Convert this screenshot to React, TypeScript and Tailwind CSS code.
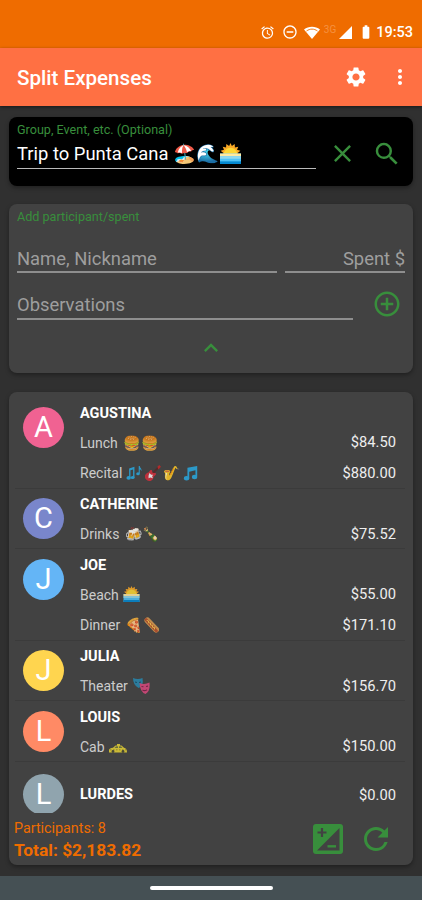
import type { ReactNode } from 'react'
import {
  MdAccessAlarm,
  MdAddCircleOutline,
  MdBatteryFull,
  MdClose,
  MdKeyboardArrowUp,
  MdMoreVert,
  MdRefresh,
  MdRemoveCircleOutline,
  MdSearch,
  MdSettings,
} from 'react-icons/md'

type Item = { label: string; icons: ReactNode; amount: string }

type Participant = { name: string; color: string; items: Item[] }

function Sunrise({ className }: { className: string }) {
  return (
    <svg viewBox="0 0 20 20" className={`inline-block ${className}`}>
      <path d="M10 0l1.300 2.800L14 1l.2 3.200 3.200-.6-1.200 2.900 3.200.8-2.600 2.200V12H3.200V9.500L.6 7.300l3.200-.8-1.200-2.900 3.200.6L6 1l2.700 1.800z" fill="#f9a825" />
      <path d="M3.500 11a6.500 6.500 0 0113 0z" fill="#fdd835" />
      <path d="M0 10h20v10H0z" fill="#4fc3f7" />
      <path d="M0 10h20v2.500H0z" fill="#ffe9a0" />
      <path d="M0 12.500h20v2.500H0z" fill="#8fd8ee" />
      <path d="M0 17.500h20V20H0z" fill="#0288d1" />
    </svg>
  )
}

// two separate pairs of notes, the right one smaller and higher
function Notes() {
  return (
    <svg viewBox="0 0 18 18" className="inline-block w-4 h-4 -mt-1 mr-[3px]" fill="#29a9e0">
      <path d="M3.500 14V4l6-2v12H8V5L5 6v8z" />
      <ellipse cx="3" cy="14.500" rx="2.500" ry="2" />
      <ellipse cx="7.500" cy="14" rx="2.200" ry="1.700" />
      <path d="M14.300 9.500V1h1.200c0 2 2.500 2.500 2 6-.5-1.600-1.300-2-2-2v4.500z" />
      <ellipse cx="13.500" cy="9.800" rx="2" ry="1.700" />
    </svg>
  )
}

function Guitar() {
  return (
    <svg viewBox="0 0 18 18" className="inline-block w-4 h-4 -mt-1 mr-[2px]">
      <path d="M8 10L15 3" stroke="#5b2526" strokeWidth="2" />
      <path d="M14 2l2-2 2 2-3 3z" fill="#c62828" />
      <path d="M1 10c2-2 3-1 4-3s3-2 3 0 1 2 3 2 2 2 0 3-1 3-3 5-5 1-7-1-1-5 0-6z" fill="#d32f3c" />
      <path d="M5 9l2 2 2 0-1 2 1 2-3-1-2 1 0-3z" fill="#f5f5f5" />
    </svg>
  )
}

function Note() {
  return (
    <svg viewBox="0 0 18 18" className="inline-block w-4 h-4 -mt-1 ml-[3px]" fill="#29a9e0">
      <path d="M5 3l11-2v12h-2V6L7 7.500V15H5z" />
      <ellipse cx="4" cy="15" rx="3" ry="2.500" />
      <ellipse cx="13" cy="13.500" rx="3" ry="2.500" />
    </svg>
  )
}

function HotDog() {
  return (
    <svg viewBox="0 0 16 16" className="inline-block w-4 h-4 -mt-1" fill="none" strokeLinecap="round">
      <path d="M4.500 3.500l8.500 9" stroke="#d99a4e" strokeWidth="6" />
      <path d="M3 2.500l10.500 11.500" stroke="#b9502c" strokeWidth="2.800" />
      <path d="M4 3.500l1.500.5v1.800l2 .2v2l2 .3v1.900l2 .3v1.500" stroke="#ffca4b" strokeWidth="1" />
    </svg>
  )
}

function Masks() {
  return (
    <svg viewBox="0 0 17 17" className="inline-block w-[17px] h-[17px] -mt-1 ml-[2px]">
      <path d="M0 1q5 2 9.500 0 1.500 8-4 10Q0 8 0 1z" fill="#2787ad" />
      <path d="M2 5l2 .5M6 5.500L8 5" stroke="#174d68" strokeWidth="1" />
      <path d="M6.500 6q5 2 10-.5 1 9-4 11.500-5.500-2-6-11z" fill="#d8497d" />
      <path d="M8.500 9.500l2 .2M13 9.500l2-.4M9.500 13q2 1.500 4.500-.3" stroke="#7d2249" strokeWidth="1.100" fill="none" />
    </svg>
  )
}

function Taxi() {
  return (
    <svg viewBox="0 0 18 9" className="inline-block w-[18px] h-[9px] ml-px">
      <path d="M0 8.500V6Q.5 4 4 3.800L6.500 1.500H8V0h3v1.500h1.500L15 3.800q3 .4 3 4.700z" fill="#e3cf35" />
      <path d="M5.500 3.800L7 2.400h2v1.400zM10 2.400h2l1.400 1.400H10z" fill="#4c5a46" />
      <path d="M1 5.800h16" stroke="#8a8430" strokeWidth="0.800" strokeDasharray="1.500" />
      <circle cx="4" cy="7.500" r="1.400" fill="#4a4a32" />
      <circle cx="14" cy="7.500" r="1.400" fill="#4a4a32" />
    </svg>
  )
}

const PARTICIPANTS: Participant[] = [
  {
    name: 'AGUSTINA',
    color: 'bg-[#f06292]',
    items: [
      { label: 'Lunch', icons: <span className="tracking-[1px] ml-[2px]">🍔🍔</span>, amount: '$84.50' },
      { label: 'Recital', icons: <><Notes /><Guitar />🎷<Note /></>, amount: '$880.00' },
    ],
  },
  {
    name: 'CATHERINE',
    color: 'bg-[#7986cb]',
    items: [{ label: 'Drinks', icons: <span className="ml-[2px]">🍻🍾</span>, amount: '$75.52' }],
  },
  {
    name: 'JOE',
    color: 'bg-[#64b5f6]',
    items: [
      { label: 'Beach', icons: <Sunrise className="w-[17px] h-4 -mt-1 ml-px" />, amount: '$55.00' },
      { label: 'Dinner', icons: <span className="ml-[2px]">🍕<HotDog /></span>, amount: '$171.10' },
    ],
  },
  { name: 'JULIA', color: 'bg-[#ffd54f]', items: [{ label: 'Theater', icons: <Masks />, amount: '$156.70' }] },
  { name: 'LOUIS', color: 'bg-[#ff8a65]', items: [{ label: 'Cab', icons: <Taxi />, amount: '$150.00' }] },
  { name: 'LURDES', color: 'bg-[#90a4ae]', items: [] },
]

function StatusBar() {
  return (
    <div className="h-12 bg-[#ef6c00] flex items-start justify-end pr-[9px] pt-[22px] text-white">
      <div className="flex items-center h-5">
        <MdAccessAlarm className="w-[15px] h-[15px] mr-[7px]" />
        <MdRemoveCircleOutline className="w-4 h-4 mr-[6px]" />
        <svg viewBox="0 0 16 13" className="w-4 h-[13px] mr-1" fill="#fff">
          <path d="M0 3.500C4.500-.2 11.500-.2 16 3.500L8 13Z" />
          <path d="M2.500 5C6 2.500 10 2.500 13.500 5" stroke="#ef6c00" strokeWidth="0.900" fill="none" />
        </svg>
        <span className="text-[10px] leading-none text-[#f59140] -mt-1 mr-[3px]">3G</span>
        <svg viewBox="0 0 13 13" className="w-[13px] h-[13px] mr-[6px]" fill="#fff">
          <path d="M13 0V13H0Z" />
        </svg>
        <MdBatteryFull className="w-4 h-4 mr-[2px]" />
        <span className="text-[14.5px] font-medium leading-5 pt-px">19:53</span>
      </div>
    </div>
  )
}

// rounded square split on the diagonal, plus on the solid half and minus on the open one
function BalanceIcon({ className }: { className: string }) {
  return (
    <svg viewBox="0 0 30 30" className={className}>
      <rect width="30" height="30" rx="3" fill="#388e3c" />
      <path d="M26.500 4v22.500H4z" fill="#424242" />
      <path d="M4.500 8.500h9M9 4v9" stroke="#424242" strokeWidth="2.200" />
      <path d="M14.500 22.300h8.500" stroke="#388e3c" strokeWidth="2.400" />
    </svg>
  )
}

function Card({ className, children }: { className: string; children: ReactNode }) {
  return <section className={`mx-[9px] rounded-lg shadow-[0_2px_4px_rgba(0,0,0,0.35)] ${className}`}>{children}</section>
}

function ParticipantRow({ name, color, items }: Participant) {
  const empty = items.length === 0
  return (
    <div className={`flex ml-[6px] mr-2 pl-2 pr-[9px] shadow-[inset_0_-1px_0_#3b3b3b] ${empty ? 'h-[52px] pt-3' : 'pt-[9.5px]'}`}>
      <div className={`w-[41px] h-[41px] shrink-0 rounded-full flex items-center justify-center text-white text-[29px] leading-none ${color}`}>
        {name[0]}
      </div>
      <div className={`ml-4 flex-1 text-sm ${empty ? 'pt-[10.5px]' : '-mt-[3.5px]'}`}>
        <div className="flex justify-between h-[22px] items-center">
          <span className="font-bold text-white text-[14.5px]">{name}</span>
          {empty && <span className="text-[#eee] text-[14.7px]">$0.00</span>}
        </div>
        <div className="pt-[2px]">
          {items.map(item => (
            <div key={item.label} className="flex justify-between items-center h-[30.67px]">
              <span className="text-[#ccc]">
                {item.label} <span className="opacity-85">{item.icons}</span>
              </span>
              <span className="text-[#eee] text-[14.7px]">{item.amount}</span>
            </div>
          ))}
        </div>
      </div>
    </div>
  )
}

export default function App() {
  return (
    <div className="w-[422px] h-[900px] overflow-hidden flex flex-col bg-[#303030] font-[Roboto,'Noto_Color_Emoji',sans-serif]">
      <StatusBar />
      <header className="h-[58px] bg-[#ff7043] flex items-center pl-[17px] pr-[10px] text-white shadow-[0_1px_3px_rgba(0,0,0,0.5)]">
        <h1 className="flex-1 text-[20.6px] font-medium pt-0.5">Split Expenses</h1>
        <MdSettings className="w-6 h-6 mr-5" />
        <MdMoreVert className="w-6 h-6" />
      </header>

      <Card className="mt-[11px] h-[69px] bg-black flex px-2 text-[#388e3c]">
        <div className="w-[299px]">
          <p className="text-[12.6px] leading-4 pt-[5px]">Group, Event, etc. (Optional)</p>
          <p className="h-[31px] border-b border-[#bbb] text-white text-[18.4px] leading-[32px] whitespace-nowrap">
            Trip to Punta Cana <span className="tracking-[0.5px]">🏖️🌊</span>
            <Sunrise className="w-[21px] h-[21px] -mt-1" />
          </p>
        </div>
        <MdClose className="w-[29px] h-[29px] mt-[22px] ml-3" />
        <MdSearch className="w-[30px] h-[30px] mt-[22px] ml-[15px]" />
      </Card>

      <Card className="mt-[18px] h-[169px] bg-[#424242] px-2 text-[#388e3c]">
        <p className="text-[12.6px] leading-4 pt-[5px]">Add participant/spent</p>
        <div className="flex gap-2 mt-[17px] text-[18.4px] leading-[33px] text-[#9e9e9e]">
          <div className="w-[260px] h-[31px] border-b-2 border-[#8e8e8e]">Name, Nickname</div>
          <div className="flex-1 h-[31px] border-b-2 border-[#8e8e8e] text-right">Spent $</div>
        </div>
        <div className="flex mt-[15px]">
          <div className="w-[336px] h-8 border-b-2 border-[#8e8e8e] text-[18.4px] leading-[34px] text-[#9e9e9e]">Observations</div>
          <MdAddCircleOutline className="w-[30px] h-[30px] ml-[19px] mt-px" />
        </div>
        <MdKeyboardArrowUp className="w-7 h-7 mx-auto mt-[14px]" />
      </Card>

      <Card className="mt-[19px] h-[473px] bg-[#424242] flex flex-col">
        <div className="h-[421px] pt-[5.5px] overflow-hidden">
          {PARTICIPANTS.map(p => (
            <ParticipantRow key={p.name} {...p} />
          ))}
        </div>
        <footer className="flex-1 flex pl-[5px] text-[#388e3c]">
          <div className="flex-1 text-[#ef6c00]">
            <p className="text-[14.3px] leading-5 pt-[5px]">Participants: 8</p>
            <p className="text-[17.4px] font-bold leading-6">Total: $2,183.82</p>
          </div>
          <BalanceIcon className="w-[30px] h-[30px] mt-[11px]" />
          <MdRefresh className="w-9 h-9 mt-2 ml-[15px] mr-[19px]" />
        </footer>
      </Card>

      <div className="mt-[11px] flex-1 bg-[#455054] flex justify-center pt-[10px]">
        <div className="w-[123px] h-1 rounded-full bg-white" />
      </div>
    </div>
  )
}
